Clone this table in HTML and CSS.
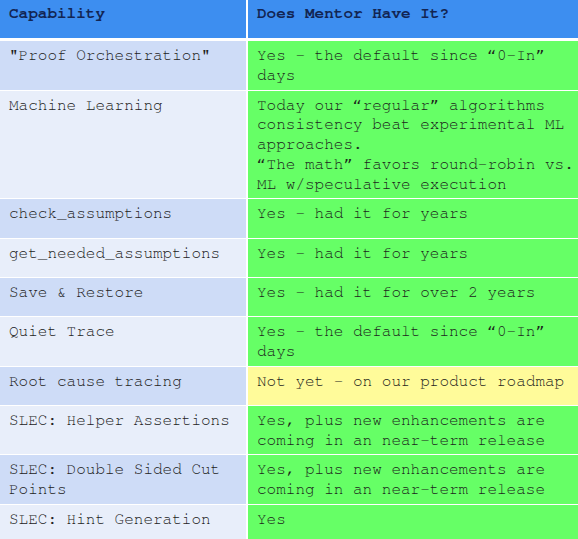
FILE: index.html
```html
<!DOCTYPE html>
<html>
<head>
<meta charset="utf-8">
<link rel="stylesheet" href="styles.css">
</head>
<body>
<table class="cap-table">
  <colgroup><col class="col-cap"><col class="col-ans"></colgroup>
  <thead>
    <tr>
      <th class="cap">Capability</th>
      <th class="ans">Does Mentor Have It?</th>
    </tr>
  </thead>
  <tbody>
    <tr class="dark">
      <td class="cap">"Proof Orchestration"</td>
      <td class="ans yes">Yes – the default since “0-In” days</td>
    </tr>
    <tr class="light">
      <td class="cap">Machine Learning</td>
      <td class="ans yes">Today our “regular” algorithms consistency beat experimental ML approaches.<br>“The math” favors round-robin vs. ML w/speculative execution</td>
    </tr>
    <tr class="dark single">
      <td class="cap">check_assumptions</td>
      <td class="ans yes">Yes – had it for years</td>
    </tr>
    <tr class="light single">
      <td class="cap">get_needed_assumptions</td>
      <td class="ans yes">Yes – had it for years</td>
    </tr>
    <tr class="dark single">
      <td class="cap">Save &amp; Restore</td>
      <td class="ans yes">Yes – had it for over 2 years</td>
    </tr>
    <tr class="light">
      <td class="cap">Quiet Trace</td>
      <td class="ans yes">Yes – the default since “0-In” days</td>
    </tr>
    <tr class="dark single">
      <td class="cap">Root cause tracing</td>
      <td class="ans notyet">Not yet – on our product roadmap</td>
    </tr>
    <tr class="light">
      <td class="cap">SLEC: Helper Assertions</td>
      <td class="ans yes">Yes, plus new enhancements are coming in an near-term release</td>
    </tr>
    <tr class="dark">
      <td class="cap">SLEC: Double Sided Cut Points</td>
      <td class="ans yes">Yes, plus new enhancements are coming in an near-term release</td>
    </tr>
    <tr class="light single">
      <td class="cap">SLEC: Hint Generation</td>
      <td class="ans yes">Yes</td>
    </tr>
  </tbody>
</table>
</body>
</html>
```

FILE: styles.css
```css
html, body {
  margin: 0;
  padding: 0;
  background: #ffffff;
}

.cap-table {
  width: 578px;
  table-layout: fixed;
  border-collapse: separate;
  border-spacing: 0;
  font-family: "Nimbus Mono PS", "Nimbus Mono L", "FreeMono", "Courier New", "Liberation Mono", monospace;
  font-size: 16px;
  line-height: 19.75px;
  color: #222222;
}

.col-cap { width: 248px; }
.col-ans { width: 330px; }

.cap-table th,
.cap-table td {
  text-align: left;
  vertical-align: top;
  padding: 5px 3px 4px 9px;
  border-bottom: 1px solid #ffffff;
}

.cap-table th {
  background: #3d8ef0;
  color: #122553;
  font-weight: bold;
  height: 29px;
  padding-top: 4px;
  padding-bottom: 5px;
  border-bottom: 3px solid #ffffff;
}

.cap-table .cap {
  border-right: 2px solid #ffffff;
}

.cap-table tr.single td {
  height: 29.25px;
}

.dark .cap { background: #cedcf7; }
.light .cap { background: #e8eefa; }

.ans.yes { background: #66ff66; color: #1c261c; }
.ans.notyet { background: #fffb9a; color: #26261c; }
```
